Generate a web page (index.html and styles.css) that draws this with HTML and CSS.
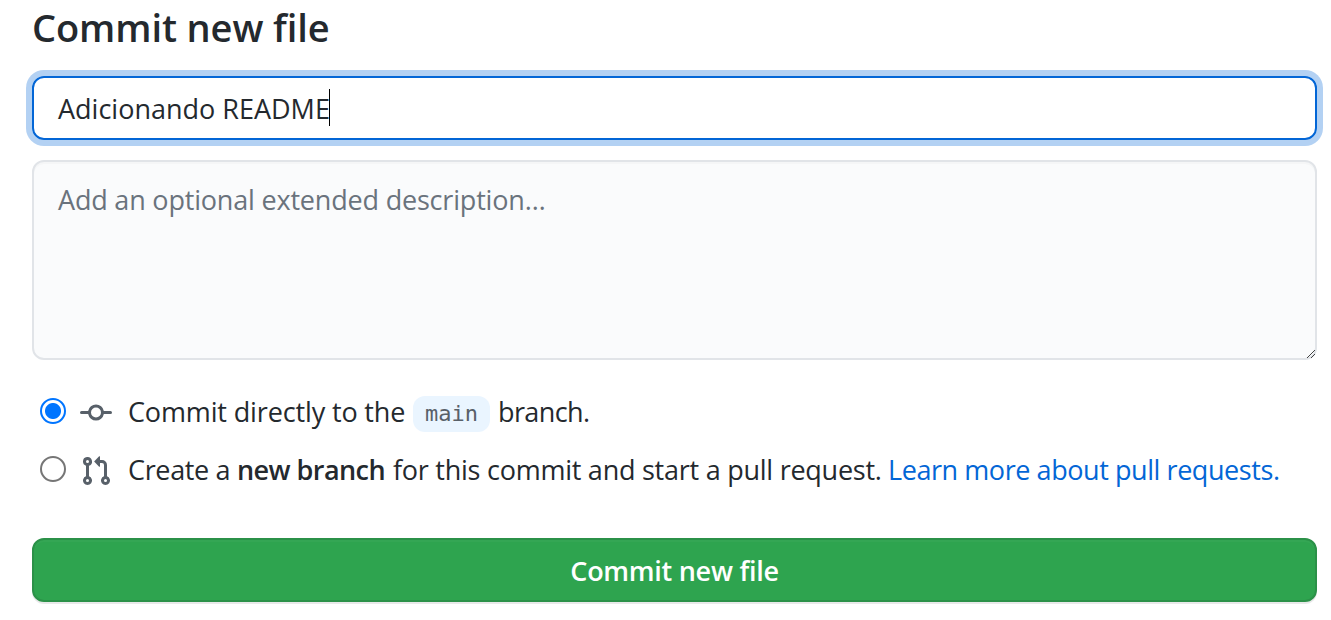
FILE: index.html
```html
<!DOCTYPE html>
<html lang="en">
<head>
<meta charset="utf-8">
<title>Commit new file</title>
<link rel="stylesheet" href="styles.css">
</head>
<body>
<form class="commit-form">
  <h1 class="title"><span class="title-text">Commit new file</span></h1>
  <div class="summary"><span class="summary-text">Adicionando README</span><span class="caret"></span></div>
  <div class="description"><span class="placeholder">Add an optional extended description…</span>
    <svg class="grip" viewBox="0 0 10 10" shape-rendering="crispEdges"><path d="M0 8h1v1H0zM1 7h1v1H1zM2 6h1v1H2zM3 5h1v1H3zM4 4h1v1H4zM5 3h1v1H5zM6 2h1v1H6zM7 1h1v1H7zM4 8h1v1H4zM5 7h1v1H5zM6 6h1v1H6zM7 5h1v1H7z"/></svg>
  </div>
  <div class="choices">
    <label class="choice">
      <span class="radio checked"></span>
      <svg class="icon" viewBox="0 0 16 16"><path fill-rule="evenodd" d="M10.5 7.75a2.5 2.5 0 11-5 0 2.5 2.5 0 015 0zm1.43.75a4.002 4.002 0 01-7.86 0H.75a.75.75 0 110-1.5h3.32a4.001 4.001 0 017.86 0h3.32a.75.75 0 110 1.5h-3.32z"/></svg>
      <span class="choice-text"><span class="direct">Commit directly to the</span><code class="branch">main</code><span class="direct-end">branch.</span></span>
    </label>
    <label class="choice">
      <span class="radio"></span>
      <svg class="icon" viewBox="0 0 16 16"><path fill-rule="evenodd" d="M7.177 3.073L9.573.677A.25.25 0 0110 .854v4.792a.25.25 0 01-.427.177L7.177 3.427a.25.25 0 010-.354zM3.75 2.5a.75.75 0 100 1.5.75.75 0 000-1.5zm-2.25.75a2.25 2.25 0 113 2.122v5.256a2.251 2.251 0 11-1.5 0V5.372A2.25 2.25 0 011.5 3.25zM11 2.5h-1V4h1a1 1 0 011 1v5.628a2.251 2.251 0 101.5 0V5A2.5 2.5 0 0011 2.5zm1 10.25a.75.75 0 111.5 0 .75.75 0 01-1.5 0zM3.75 12a.75.75 0 100 1.5.75.75 0 000-1.5z"/></svg>
      <span class="choice-text"><span class="create">Create a</span><b class="new-branch">new branch</b><span class="reason">for this commit and start a pull request.</span><a class="learn">Learn more about pull requests.</a></span>
    </label>
  </div>
  <button class="submit" type="button"><span class="submit-text">Commit new file</span></button>
</form>
</body>
</html>
```
FILE: styles.css
```css
* { box-sizing: border-box; }
body {
  margin: 0;
  background: #fff;
  color: #24292e;
  font-family: "Open Sans", "Noto Sans", sans-serif;
  font-size: 27px;
  line-height: 42px;
}
.commit-form {
  display: flex;
  flex-direction: column;
  width: 1317px;
  height: 620px;
  padding-left: 32px;
}
.title {
  height: 76px;
  margin: 0;
  padding-top: 3px;
  font-size: 38px;
  font-weight: 600;
  line-height: 48px;
}
.title-text { letter-spacing: -.1px; }
.summary {
  display: flex;
  align-items: center;
  height: 64px;
  padding-left: 24px;
  border: 2px solid #0366d6;
  border-radius: 12px;
  box-shadow: 0 0 0 6px #b3d1f3;
}
.summary-text {
  width: 271px;
  padding-top: 2px;
  white-space: nowrap;
}
.caret { width: 1px; height: 37px; margin-bottom: 1px; background: #000; }
.description {
  position: relative;
  height: 200px;
  margin-top: 20px;
  padding: 17px 24px;
  border: 2px solid #e1e4e8;
  border-radius: 12px;
  background: #fafbfc;
  box-shadow: inset 0 2px 0 rgba(225, 228, 232, .2);
}
.placeholder { color: #6a737d; letter-spacing: -.19px; }
.grip {
  position: absolute;
  right: -2px;
  bottom: -1px;
  width: 10px;
  height: 10px;
  fill: #444;
}
.choices { margin-top: 24px; }
.choice {
  display: flex;
  align-items: center;
  height: 58px;
  padding-left: 8px;
}
.radio {
  width: 26px;
  height: 26px;
  margin-bottom: 4px;
  border: 2px solid #767676;
  border-radius: 50%;
}
.checked {
  border-color: #0075ff;
  background: radial-gradient(circle, #0075ff 7.5px, transparent 8.5px);
}
.icon {
  width: 32px;
  height: 32px;
  margin-left: 14px;
  fill: #586069;
}
.choice-text {
  display: flex;
  align-items: center;
  margin-bottom: 2px;
  margin-left: 16px;
  white-space: nowrap;
}
.direct { width: 285px; letter-spacing: -.14px; }
.branch {
  width: 77px;
  height: 36px;
  margin-top: 4px;
  border-radius: 12px;
  background: #eaf5ff;
  color: #586069;
  font: 22px/36px "DejaVu Sans Mono", monospace;
  text-align: center;
}
.direct-end { margin-left: 8px; letter-spacing: -.6px; }
.create { width: 109px; letter-spacing: -.35px; }
.new-branch { width: 156px; font-weight: 600; letter-spacing: -.55px; }
.reason { width: 495px; letter-spacing: -.25px; }
.learn { color: #0366d6; letter-spacing: -.43px; }
.submit {
  height: 64px;
  margin-top: 38px;
  padding: 2px 0 0;
  border: 2px solid #2b9148;
  border-radius: 12px;
  background: #2ea44f;
  box-shadow: 0 2px 0 rgba(27, 31, 35, .1), inset 0 2px 0 rgba(255, 255, 255, .03);
  color: #fff;
  font: 600 27px/42px "Open Sans", "Noto Sans", sans-serif;
  letter-spacing: -.27px;
}
```
